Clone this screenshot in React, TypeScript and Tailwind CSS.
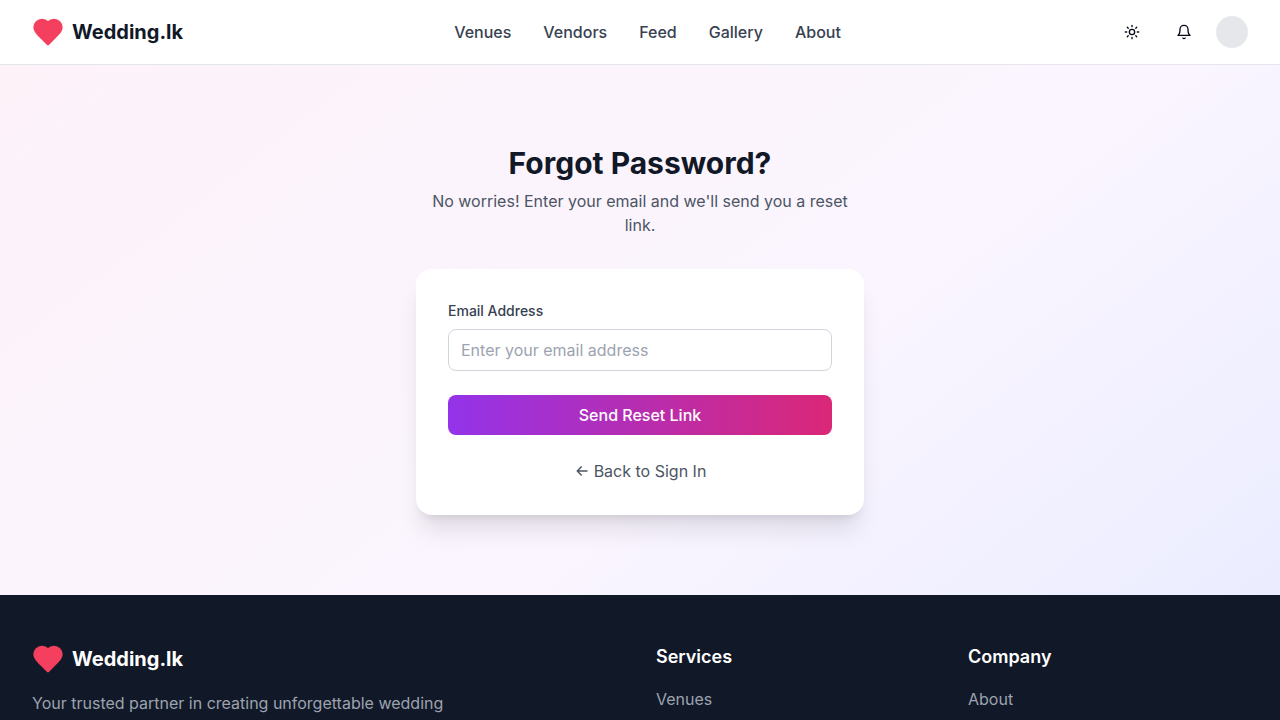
const links = ['Venues', 'Vendors', 'Feed', 'Gallery', 'About'];

function Logo({ light = false }: { light?: boolean }) {
  return (
    <div className="flex items-center gap-2">
      <svg viewBox="0 0 24 24" className="h-8 w-8 fill-[#f43f5e] stroke-[#f43f5e]" strokeWidth={2} strokeLinecap="round" strokeLinejoin="round">
        <path d="M19 14c1.49-1.46 3-3.21 3-5.5A5.5 5.5 0 0 0 16.5 3c-1.76 0-3 .5-4.5 2-1.5-1.5-2.74-2-4.5-2A5.5 5.5 0 0 0 2 8.5c0 2.3 1.5 4.05 3 5.5l7 7Z" />
      </svg>
      <span className={light ? 'text-xl font-bold text-white' : 'text-xl font-bold text-[#111827]'}>Wedding.lk</span>
    </div>
  );
}

function Icon({ d }: { d: string }) {
  return (
    <div className="flex h-9 w-9 items-center justify-center">
      <svg viewBox="0 0 24 24" className="h-4 w-4 fill-none stroke-current" strokeWidth={2} strokeLinecap="round" strokeLinejoin="round">
        <path d={d} />
      </svg>
    </div>
  );
}

export default function App() {
  return (
    <div className="h-[720px] overflow-hidden bg-[linear-gradient(to_bottom_right,#fdf2f8,#faf5ff,#e0e7ff)] bg-[length:100%_1000px] bg-no-repeat font-['Inter',sans-serif] text-base text-[#111827] antialiased">
      <header className="flex h-[65px] items-center justify-between border-b border-[#e5e7eb] bg-white px-8">
        <Logo />
        <nav className="-ml-0.5 flex gap-8">
          {links.map((l) => (
            <a key={l} className="font-medium text-[#374151]">{l}</a>
          ))}
        </nav>
        <div className="flex items-center gap-4 text-[#020817]">
          <Icon d="M16 12a4 4 0 1 1-8 0a4 4 0 0 1 8 0ZM12 2v2M12 20v2m-7.07-17.07 1.41 1.41m11.32 11.32 1.41 1.41M2 12h2m16 0h2M6.34 17.66l-1.41 1.41M19.07 4.93l-1.41 1.41" />
          <Icon d="M6 8a6 6 0 0 1 12 0c0 7 3 9 3 9H3s3-2 3-9M10.3 21a1.94 1.94 0 0 0 3.4 0" />
          <div className="-ml-0.5 h-8 w-8 rounded-full bg-[#e5e7eb]" />
        </div>
      </header>
      <main className="flex h-[530px] flex-col items-center pt-20">
        <div className="w-[448px] text-center">
          <h1 className="mb-2 text-3xl font-bold">Forgot Password?</h1>
          <p className="text-[#4b5563]">No worries! Enter your email and we'll send you a reset link.</p>
        </div>
        <div className="mt-8 h-[246px] w-[448px] rounded-2xl bg-white p-8 shadow-xl">
          <label className="mb-2 block text-sm font-medium text-[#374151]">Email Address</label>
          <input className="block h-[42px] w-full rounded-lg border border-[#d1d5db] px-3 placeholder:text-[#9ca3af]" placeholder="Enter your email address" />
          <button className="mt-6 block h-10 w-full rounded-lg bg-[linear-gradient(to_right,#9333ea,#db2777)] font-medium text-white">Send Reset Link</button>
          <a className="mt-6 flex items-center justify-center gap-1.5 pl-0.5 text-[#4b5563]">
            <svg viewBox="0 0 12 12" className="h-3 w-3 fill-none stroke-current" strokeWidth={1.4}>
              <path d="M11.5 6H1.4M5.7 1.6 1.3 6l4.4 4.4" />
            </svg>
            Back to Sign In
          </a>
        </div>
      </main>
      <footer className="grid grid-cols-4 gap-8 bg-[#111827] px-8 py-12">
        <div className="col-span-2">
          <Logo light />
          <p className="mt-4 max-w-md text-[#9ca3af]">Your trusted partner in creating unforgettable wedding</p>
        </div>
        <div>
          <h3 className="mb-4 text-lg font-semibold text-white">Services</h3>
          <a className="text-[#9ca3af]">Venues</a>
        </div>
        <div>
          <h3 className="mb-4 text-lg font-semibold text-white">Company</h3>
          <a className="text-[#9ca3af]">About</a>
        </div>
      </footer>
    </div>
  );
}
